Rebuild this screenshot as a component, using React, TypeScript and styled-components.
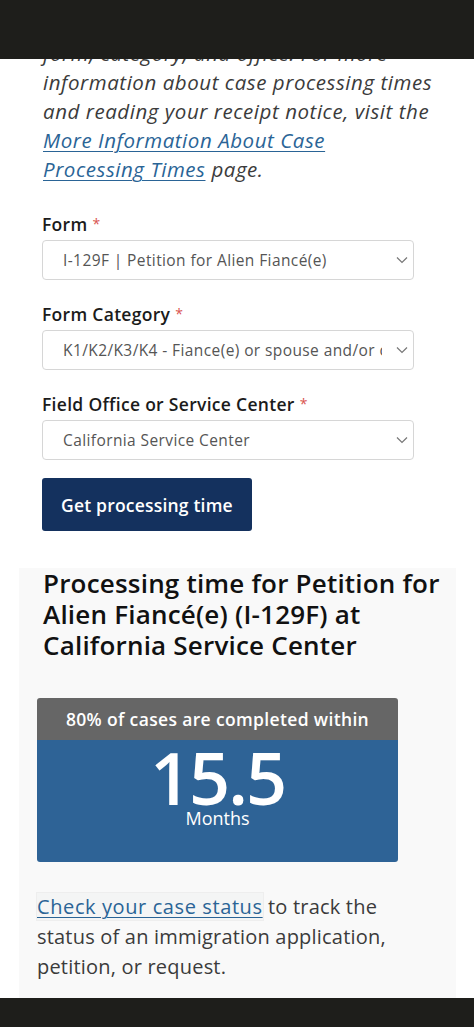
import React from "react";
import styled, { createGlobalStyle } from "styled-components";

const Global = createGlobalStyle`
  html, body { margin: 0; padding: 0; background: #ffffff; }
  body { font-family: "Open Sans", Lato, sans-serif; -webkit-font-smoothing: antialiased; }
  * { box-sizing: border-box; }
`;

const Page = styled.div`
  width: 474px;
  height: 1027px;
  display: flex;
  flex-direction: column;
  overflow: hidden;
  background: #ffffff;
`;

const SystemBar = styled.div<{ $h: number }>`
  flex: 0 0 ${(p) => p.$h}px;
  background: #1e1e1b;
`;

const Content = styled.div`
  flex: 1;
  overflow: hidden;
  display: flex;
  flex-direction: column;
`;

const Intro = styled.p`
  margin: -20px 0 0 0;
  padding: 0 0 0 43px;
  font-size: 20.5px;
  line-height: 29px;
  letter-spacing: 0.55px;
  font-style: italic;
  color: #3b3b3b;
  white-space: nowrap;
`;

const Link = styled.a`
  color: #2a6496;
  text-decoration: underline;
  text-underline-offset: 3px;
  text-decoration-thickness: 1px;
`;

const StatusLink = styled(Link)`
  letter-spacing: 0.6px;
  background: #f4f5f5;
  box-shadow: 0 0 0 1px #eeeeee;
`;

const Form = styled.div`
  display: flex;
  flex-direction: column;
  padding: 29px 0 0 42px;
  width: 414px;
`;

const Field = styled.div`
  display: flex;
  flex-direction: column;
  gap: 5px;
  margin-bottom: 23px;
`;

const Label = styled.label`
  font-size: 17.5px;
  font-weight: 600;
  letter-spacing: 0.3px;
  color: #1b1b1b;
  line-height: 22px;
`;

const Req = styled.span`
  color: #d9534f;
  font-weight: 400;
  font-size: 14px;
  vertical-align: top;
  margin-left: 5px;
`;

const SelectBox = styled.div`
  height: 40px;
  border: 1px solid #d6d6d6;
  border-radius: 4px;
  background: #ffffff;
  display: flex;
  align-items: center;
  padding: 0 5px 0 20px;
  gap: 14px;
`;

const SelectText = styled.span`
  flex: 1;
  font-size: 15.5px;
  letter-spacing: 0.4px;
  color: #555555;
  white-space: nowrap;
  overflow: hidden;
`;

const Chevron = () => (
  <svg width="12" height="8" viewBox="0 0 12 8" fill="none">
    <path d="M1 1.5 L6 6.5 L11 1.5" stroke="#777" strokeWidth="1.2" />
  </svg>
);

const Button = styled.button`
  align-self: flex-start;
  margin-top: -5px;
  height: 53px;
  padding: 0 19px;
  background: #14315e;
  color: #ffffff;
  border: none;
  border-radius: 3px;
  font-family: inherit;
  font-size: 17.5px;
  letter-spacing: 0.2px;
  font-weight: 600;
`;

const Panel = styled.section`
  margin: 37px 18px 0 19px;
  background: #f9f9f9;
  flex: 1;
  padding: 0 18px;
  display: flex;
  flex-direction: column;
`;

const Heading = styled.h2`
  margin: 0;
  padding: 0 0 0 6px;
  font-size: 26px;
  line-height: 31px;
  letter-spacing: 0.2px;
  font-weight: 600;
  color: #111111;
  white-space: nowrap;
`;

const Card = styled.div`
  margin-top: 37px;
  width: 361px;
  border-radius: 3px;
  overflow: hidden;
`;

const CardHead = styled.div`
  height: 42px;
  background: #666666;
  color: #ffffff;
  font-size: 17.5px;
  letter-spacing: 0.35px;
  font-weight: 600;
  display: flex;
  align-items: center;
  justify-content: center;
`;

const CardBody = styled.div`
  height: 122px;
  background: #2e6396;
  color: #ffffff;
  display: flex;
  flex-direction: column;
  align-items: center;
  padding-top: 1px;
`;

const Big = styled.div`
  font-size: 72px;
  font-weight: 600;
  line-height: 72px;
  letter-spacing: -2px;
`;

const Unit = styled.div`
  margin-top: -4px;
  font-size: 18px;
  line-height: 18px;
`;

const Status = styled.p`
  margin: 30px 0 0 0;
  font-size: 20px;
  line-height: 30px;
  letter-spacing: 0.2px;
  color: #3b3b3b;
  white-space: nowrap;
`;

export default function App() {
  return (
    <Page>
      <Global />
      <SystemBar $h={59} />
      <Content>
        <Intro>
          form, category, and office. For more
          <br />
          information about case processing times
          <br />
          and reading your receipt notice, visit the
          <br />
          <Link href="#">
            More Information About Case
            <br />
            Processing Times
          </Link>{" "}
          page.
        </Intro>
        <Form>
          <Field>
            <Label>
              Form<Req>*</Req>
            </Label>
            <SelectBox>
              <SelectText>I-129F | Petition for Alien Fiancé(e)</SelectText>
              <Chevron />
            </SelectBox>
          </Field>
          <Field>
            <Label>
              Form Category<Req>*</Req>
            </Label>
            <SelectBox>
              <SelectText>K1/K2/K3/K4 - Fiance(e) or spouse and/or children</SelectText>
              <Chevron />
            </SelectBox>
          </Field>
          <Field>
            <Label>
              Field Office or Service Center<Req>*</Req>
            </Label>
            <SelectBox>
              <SelectText>California Service Center</SelectText>
              <Chevron />
            </SelectBox>
          </Field>
          <Button>Get processing time</Button>
        </Form>
        <Panel>
          <Heading>
            Processing time for Petition for
            <br />
            Alien Fiancé(e) (I-129F) at
            <br />
            California Service Center
          </Heading>
          <Card>
            <CardHead>80% of cases are completed within</CardHead>
            <CardBody>
              <Big>15.5</Big>
              <Unit>Months</Unit>
            </CardBody>
          </Card>
          <Status>
            <StatusLink href="#">Check your case status</StatusLink> to track the
            <br />
            status of an immigration application,
            <br />
            petition, or request.
          </Status>
        </Panel>
      </Content>
      <SystemBar $h={29} />
    </Page>
  );
}
